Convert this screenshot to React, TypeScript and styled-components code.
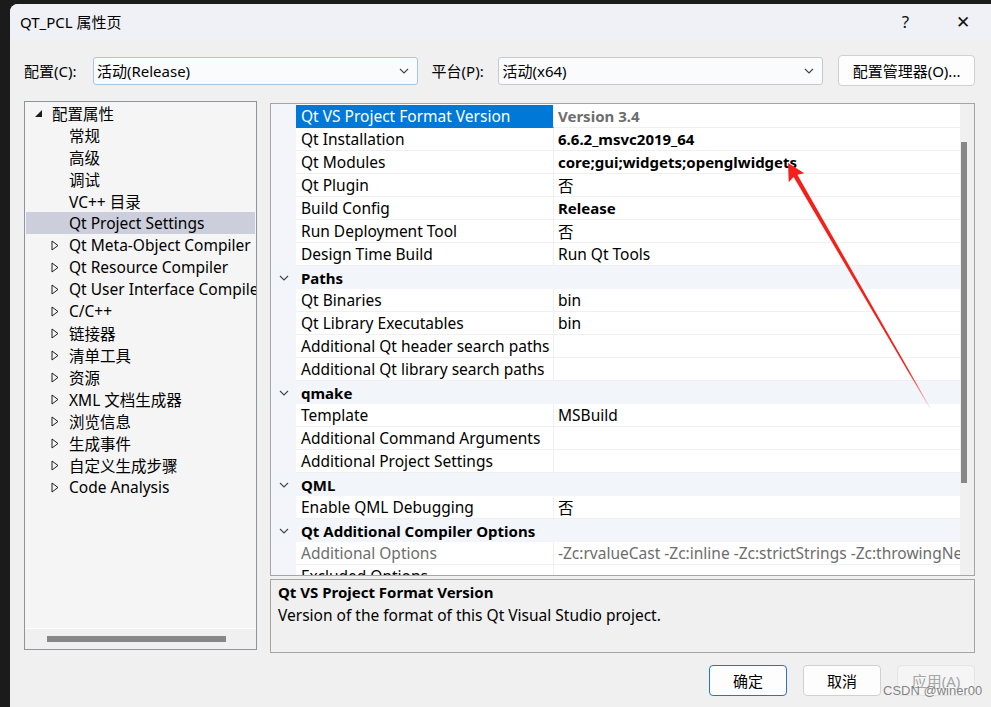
import React from 'react'
import styled, { createGlobalStyle } from 'styled-components'

const GlobalStyle = createGlobalStyle`
  html, body {
    margin: 0;
    padding: 0;
    background: #1b1b1b;
    overflow: hidden;
  }
  * { box-sizing: border-box; }
`

const FONT = `'Noto Sans', 'Noto Sans CJK SC', sans-serif`
const TEXT = '15.5px'

const Screen = styled.div`
  position: relative;
  width: 991px;
  height: 707px;
  padding: 4px 0 0 10px;
  font-family: ${FONT};
  font-size: 14px;
  color: #000;
`

const Dialog = styled.div`
  height: 703px;
  background: #f0f0f0;
  border-top-left-radius: 8px;
  display: flex;
  flex-direction: column;
  overflow: hidden;
`

const TitleBar = styled.div`
  height: 36px;
  padding-bottom: 2px;
  background: #eff1f7;
  display: flex;
  align-items: center;
  padding-left: 10px;
  font-size: 15px;
`

const TitleText = styled.div`
  flex: 1;
`

const TitleButton = styled.div`
  width: 57px;
  text-align: center;
  font-size: 17px;
  color: #111;
`

const Body = styled.div`
  flex: 1;
  display: flex;
  flex-direction: column;
  padding: 15px 16px 0 14px;
`

const ConfigRow = styled.div`
  height: 31px;
  display: flex;
  align-items: center;
`

const Label = styled.div<{ w: number }>`
  width: ${(p) => p.w}px;
  font-size: 15px;
`

const Combo = styled.div<{ w: number; focus?: boolean }>`
  width: ${(p) => p.w}px;
  height: 28px;
  background: #f9fbfd;
  border: 1px solid ${(p) => (p.focus ? '#a9c5e4' : '#c9c9c9')};
  border-radius: 3px;
  display: flex;
  align-items: center;
  padding: 0 8px 0 3px;
  font-size: 15px;
  span { flex: 1; }
`

const Button = styled.div<{ w: number; primary?: boolean; disabled?: boolean }>`
  width: ${(p) => p.w}px;
  height: 31px;
  background: ${(p) => (p.disabled ? '#f5f5f5' : '#fdfdfd')};
  border: 1px solid ${(p) => (p.primary ? '#2a72c2' : p.disabled ? '#e5e5e5' : '#d0d0d0')};
  border-radius: 4px;
  display: flex;
  align-items: center;
  justify-content: center;
  font-size: 15px;
  color: ${(p) => (p.disabled ? '#a6a6a6' : '#000')};
`

const Main = styled.div`
  margin-top: 15px;
  height: 552px;
  display: flex;
  gap: 13px;
`

const Tree = styled.div`
  width: 233px;
  height: 549px;
  border: 1px solid #8e949c;
  background: #f5f5f5;
  display: flex;
  flex-direction: column;
`

const TreeList = styled.div`
  flex: 1;
  padding: 0 1px;
  overflow: hidden;
`

const TreeRow = styled.div<{ level: number; selected?: boolean }>`
  height: 22px;
  display: flex;
  align-items: center;
  white-space: nowrap;
  padding-left: ${(p) => (p.level === 0 ? 8 : 25)}px;
  background: ${(p) => (p.selected ? '#cccedb' : 'transparent')};
  font-size: ${TEXT};
`

const Twist = styled.span`
  width: 18px;
  flex-shrink: 0;
  display: inline-flex;
  align-items: center;
`

const HScroll = styled.div`
  height: 21px;
  border-top: 1px solid #fff;
  background: #f0f0f0;
  padding: 7px 0 0 22px;
`

const HThumb = styled.div`
  width: 179px;
  height: 6px;
  background: #878787;
`

const RightCol = styled.div`
  flex: 1;
  padding-top: 2px;
  display: flex;
  flex-direction: column;
  gap: 3px;
`

const Grid = styled.div`
  height: 473px;
  border: 1px solid #a5a5a5;
  background: #fff;
  display: flex;
`

const Rows = styled.div`
  flex: 1;
  padding-top: 1px;
  overflow: hidden;
  background: linear-gradient(to right, #f3f5fa 25px, #fff 25px);
`

const Row = styled.div<{ cat?: boolean }>`
  height: 23px;
  display: grid;
  grid-template-columns: 25px 258px 1fr;
  background: ${(p) => (p.cat ? '#f2f5fa' : 'transparent')};
  white-space: nowrap;
`

const Gutter = styled.div`
  display: flex;
  align-items: center;
  justify-content: center;
`

const NameCell = styled.div<{ selected?: boolean; dim?: boolean }>`
  display: flex;
  align-items: center;
  padding-left: 5px;
  overflow: hidden;
  border-bottom: 1px solid ${(p) => (p.selected ? '#0078d7' : '#f0f0f0')};
  border-right: 1px solid #f0f0f0;
  background: ${(p) => (p.selected ? '#0078d7' : 'transparent')};
  color: ${(p) => (p.selected ? '#fff' : p.dim ? '#6d6d6d' : '#000')};
  font-size: ${TEXT};
`

const CatCell = styled.div`
  grid-column: 2 / 4;
  display: flex;
  align-items: center;
  padding-left: 5px;
  font-weight: 700;
  font-size: 15px;
`

const ValueCell = styled.div<{ bold?: boolean; dim?: boolean }>`
  display: flex;
  align-items: center;
  padding-left: 4px;
  overflow: hidden;
  border-bottom: 1px solid #f0f0f0;
  font-weight: ${(p) => (p.bold ? 700 : 400)};
  font-size: ${(p) => (p.bold ? '15px' : TEXT)};
  color: ${(p) => (p.dim ? '#6d6d6d' : '#000')};
`

const VScroll = styled.div`
  width: 14px;
  flex-shrink: 0;
  background: #f0f0f0;
  padding: 38px 0 0 1px;
`

const VThumb = styled.div`
  width: 6px;
  height: 341px;
  background: #878787;
`

const Desc = styled.div`
  height: 74px;
  border: 1px solid #a5a5a5;
  background: #f0f0f0;
  padding: 1px 7px;
  font-size: ${TEXT};
  line-height: 23px;
`

const DescTitle = styled.div`
  font-weight: 700;
  font-size: 15px;
`

const Footer = styled.div`
  display: flex;
  justify-content: flex-end;
  gap: 16px;
  padding-top: 12px;
`

const Watermark = styled.div`
  position: absolute;
  left: 883px;
  top: 683px;
  font-family: 'Liberation Sans', sans-serif;
  font-size: 13px;
  color: rgba(110, 110, 110, 0.85);
  pointer-events: none;
`

const Overlay = styled.svg`
  position: absolute;
  left: 0;
  top: 0;
  pointer-events: none;
`

const Chevron = () => (
  <svg width="10" height="6" viewBox="0 0 10 6">
    <polyline points="1,1 5,5 9,1" fill="none" stroke="#444" strokeWidth="1.1" />
  </svg>
)

const Expanded = () => (
  <svg width="9" height="9" viewBox="0 0 9 9">
    <polygon points="8,1 8,8 1,8" fill="#1e1e1e" />
  </svg>
)

const Collapsed = () => (
  <svg width="8" height="11" viewBox="0 0 8 11">
    <polygon points="1,1 7,5.5 1,10" fill="none" stroke="#1e1e1e" strokeWidth="1" />
  </svg>
)

const treeItems: { label: string; level: number; kind: 'open' | 'leaf' | 'closed' }[] = [
  { label: '配置属性', level: 0, kind: 'open' },
  { label: '常规', level: 1, kind: 'leaf' },
  { label: '高级', level: 1, kind: 'leaf' },
  { label: '调试', level: 1, kind: 'leaf' },
  { label: 'VC++ 目录', level: 1, kind: 'leaf' },
  { label: 'Qt Project Settings', level: 1, kind: 'leaf' },
  { label: 'Qt Meta-Object Compiler', level: 1, kind: 'closed' },
  { label: 'Qt Resource Compiler', level: 1, kind: 'closed' },
  { label: 'Qt User Interface Compiler', level: 1, kind: 'closed' },
  { label: 'C/C++', level: 1, kind: 'closed' },
  { label: '链接器', level: 1, kind: 'closed' },
  { label: '清单工具', level: 1, kind: 'closed' },
  { label: '资源', level: 1, kind: 'closed' },
  { label: 'XML 文档生成器', level: 1, kind: 'closed' },
  { label: '浏览信息', level: 1, kind: 'closed' },
  { label: '生成事件', level: 1, kind: 'closed' },
  { label: '自定义生成步骤', level: 1, kind: 'closed' },
  { label: 'Code Analysis', level: 1, kind: 'closed' },
]

type Prop =
  | { cat: string }
  | { name: string; value?: string; bold?: boolean; dim?: boolean; selected?: boolean }

const props: Prop[] = [
  { name: 'Qt VS Project Format Version', value: 'Version 3.4', bold: true, selected: true },
  { name: 'Qt Installation', value: '6.6.2_msvc2019_64', bold: true },
  { name: 'Qt Modules', value: 'core;gui;widgets;openglwidgets', bold: true },
  { name: 'Qt Plugin', value: '否' },
  { name: 'Build Config', value: 'Release', bold: true },
  { name: 'Run Deployment Tool', value: '否' },
  { name: 'Design Time Build', value: 'Run Qt Tools' },
  { cat: 'Paths' },
  { name: 'Qt Binaries', value: 'bin' },
  { name: 'Qt Library Executables', value: 'bin' },
  { name: 'Additional Qt header search paths' },
  { name: 'Additional Qt library search paths' },
  { cat: 'qmake' },
  { name: 'Template', value: 'MSBuild' },
  { name: 'Additional Command Arguments' },
  { name: 'Additional Project Settings' },
  { cat: 'QML' },
  { name: 'Enable QML Debugging', value: '否' },
  { cat: 'Qt Additional Compiler Options' },
  {
    name: 'Additional Options',
    value: '-Zc:rvalueCast -Zc:inline -Zc:strictStrings -Zc:throwingNew -permissive-',
    dim: true,
  },
  { name: 'Excluded Options' },
]

// red annotation arrow from the screenshot tool
const tip = { x: 788, y: 163 }
const tail = { x: 930, y: 408 }
const dx = tail.x - tip.x
const dy = tail.y - tip.y
const len = Math.hypot(dx, dy)
const ux = dx / len
const uy = dy / len
const nx = -uy
const ny = ux
const at = (d: number, w: number) => `${tip.x + ux * d + nx * w},${tip.y + uy * d + ny * w}`
const arrowPoints = [
  at(0, 0),
  at(17, 9),
  at(15, 2.2),
  at(len, 0.4),
  at(len, -0.4),
  at(15, -2.2),
  at(17, -9),
].join(' ')

export default function App() {
  return (
    <Screen>
      <GlobalStyle />
      <Dialog>
        <TitleBar>
          <TitleText>QT_PCL 属性页</TitleText>
          <TitleButton>?</TitleButton>
          <TitleButton>✕</TitleButton>
        </TitleBar>
        <Body>
          <ConfigRow>
            <Label w={69}>配置(C):</Label>
            <Combo w={325} focus>
              <span>活动(Release)</span>
              <Chevron />
            </Combo>
            <Label w={14} />
            <Label w={67}>平台(P):</Label>
            <Combo w={325}>
              <span>活动(x64)</span>
              <Chevron />
            </Combo>
            <Label w={15} />
            <Button w={137}>配置管理器(O)...</Button>
          </ConfigRow>
          <Main>
            <Tree>
              <TreeList>
                {treeItems.map((t) => (
                  <TreeRow key={t.label} level={t.level} selected={t.label === 'Qt Project Settings'}>
                    <Twist>
                      {t.kind === 'open' ? <Expanded /> : t.kind === 'closed' ? <Collapsed /> : null}
                    </Twist>
                    {t.label}
                  </TreeRow>
                ))}
              </TreeList>
              <HScroll>
                <HThumb />
              </HScroll>
            </Tree>
            <RightCol>
              <Grid>
                <Rows>
                  {props.map((p, i) =>
                    'cat' in p ? (
                      <Row key={i} cat>
                        <Gutter>
                          <Chevron />
                        </Gutter>
                        <CatCell>{p.cat}</CatCell>
                      </Row>
                    ) : (
                      <Row key={i}>
                        <Gutter />
                        <NameCell selected={p.selected} dim={p.dim}>
                          {p.name}
                        </NameCell>
                        <ValueCell bold={p.bold} dim={p.dim || p.selected}>
                          {p.value}
                        </ValueCell>
                      </Row>
                    )
                  )}
                </Rows>
                <VScroll>
                  <VThumb />
                </VScroll>
              </Grid>
              <Desc>
                <DescTitle>Qt VS Project Format Version</DescTitle>
                <div>Version of the format of this Qt Visual Studio project.</div>
              </Desc>
            </RightCol>
          </Main>
          <Footer>
            <Button w={78} primary>确定</Button>
            <Button w={78}>取消</Button>
            <Button w={78} disabled>应用(A)</Button>
          </Footer>
        </Body>
      </Dialog>
      <Watermark>CSDN @winer00</Watermark>
      <Overlay width={991} height={707}>
        <defs>
          <linearGradient
            id="fade"
            gradientUnits="userSpaceOnUse"
            x1={tip.x}
            y1={tip.y}
            x2={tail.x}
            y2={tail.y}
          >
            <stop offset="0.85" stopColor="#f2221b" stopOpacity="1" />
            <stop offset="1" stopColor="#f2221b" stopOpacity="0.1" />
          </linearGradient>
        </defs>
        <polygon points={arrowPoints} fill="url(#fade)" />
      </Overlay>
    </Screen>
  )
}
